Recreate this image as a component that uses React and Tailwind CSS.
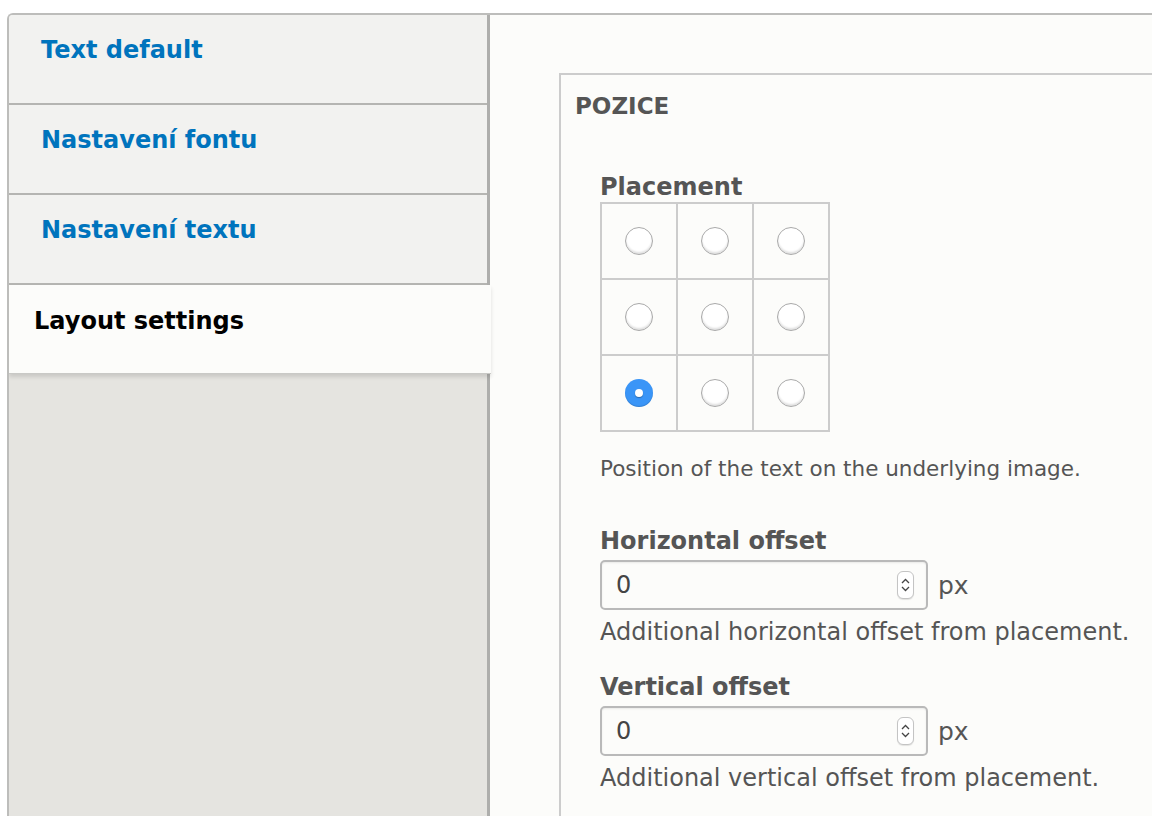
import React from "react";

const font = { fontFamily: '"DejaVu Sans", "Liberation Sans", sans-serif' };

function Radio({ checked }) {
  if (checked) {
    return (
      <div className="w-[28px] h-[28px] rounded-full bg-[#3a95f7] flex items-center justify-center shadow-[inset_0_-1px_1px_rgba(0,0,0,0.15)]">
        <div className="w-[8px] h-[8px] rounded-full bg-white shadow-[0_1px_1px_rgba(0,0,0,0.3)]" />
      </div>
    );
  }
  return (
    <div className="w-[28px] h-[28px] rounded-full border border-[#a9a9a9] bg-white shadow-[inset_0_-2px_2px_rgba(0,0,0,0.12)]" />
  );
}

function Spinner() {
  return (
    <div className="w-[17px] h-[28px] rounded-[6px] border border-[#c4c4c4] bg-white flex flex-col items-center justify-center gap-[2px] shadow-[0_1px_1px_rgba(0,0,0,0.1)]">
      <svg width="9" height="6" viewBox="0 0 9 6"><path d="M1 5 L4.5 1.5 L8 5" fill="none" stroke="#444" strokeWidth="1.3" /></svg>
      <svg width="9" height="6" viewBox="0 0 9 6"><path d="M1 1 L4.5 4.5 L8 1" fill="none" stroke="#444" strokeWidth="1.3" /></svg>
    </div>
  );
}

function NumberField({ label, desc, labelMt }) {
  return (
    <div className={labelMt}>
      <div className="text-[24px] leading-[30px] font-bold text-[#555]">{label}</div>
      <div className="flex items-center mt-[4px]">
        <div className="w-[328px] h-[50px] border-2 border-[#b9b9b9] rounded-[5px] bg-[#fcfcfa] flex items-center pl-[14px] pr-[12px] shadow-[inset_0_1px_2px_rgba(0,0,0,0.08)]">
          <span className="flex-1 text-[24px] text-[#444]">0</span>
          <Spinner />
        </div>
        <span className="ml-[10px] text-[25px] text-[#555] mt-[2px]">px</span>
      </div>
      <div className="mt-[8px] text-[24px] leading-[28px] text-[#555]">{desc}</div>
    </div>
  );
}

export default function App() {
  const tabs = ["Text default", "Nastavení fontu", "Nastavení textu"];
  return (
    <div style={font} className="w-[1152px] h-[816px] bg-white pt-[13px] pl-[7px] overflow-hidden">
      <div className="flex h-full border-t-2 border-l-2 border-[#bdbdbb] rounded-tl-[6px] overflow-hidden">
        <div className="w-[481px] shrink-0 bg-[#e5e4e0] border-r-[3px] border-[#aeaeac] flex flex-col">
          {tabs.map((t) => (
            <div key={t} className="h-[90px] shrink-0 bg-[#f2f2f0] border-b-[2px] border-[#b5b5b2] pl-[32px] pt-[20px]">
              <span className="text-[24px] leading-[30px] font-bold text-[#0074bd]">{t}</span>
            </div>
          ))}
          <div className="relative h-[89px] shrink-0 bg-[#fcfcfa] mr-[-4px] pl-[25px] pt-[21px] z-10 shadow-[0_3px_4px_rgba(0,0,0,0.12)] border-b border-[#c9c9c6]">
            <span className="text-[24px] leading-[30px] font-bold text-black">Layout settings</span>
          </div>
        </div>
        <div className="flex-1 bg-[#fcfcfa] pl-[69px] pt-[58px]">
          <div className="w-[700px] h-[900px] border-2 border-[#cccccc] pl-[14px] pt-[16px]">
            <div className="text-[23px] leading-[30px] font-bold text-[#555]">POZICE</div>
            <div className="pl-[25px] pt-[51px]">
              <div className="text-[24px] leading-[30px] font-bold text-[#555]">Placement</div>
              <div className="grid grid-cols-[repeat(3,76px)] w-fit border-l-2 border-t-2 border-[#cccccc]">
                {[0, 1, 2, 3, 4, 5, 6, 7, 8].map((i) => (
                  <div key={i} className="h-[76px] border-r-2 border-b-2 border-[#cccccc] flex items-center justify-center">
                    <Radio checked={i === 6} />
                  </div>
                ))}
              </div>
              <div className="mt-[24px] text-[21.5px] leading-[26px] text-[#555]">Position of the text on the underlying image.</div>
              <NumberField labelMt="mt-[44px]" label="Horizontal offset" desc="Additional horizontal offset from placement." />
              <NumberField labelMt="mt-[26px]" label="Vertical offset" desc="Additional vertical offset from placement." />
            </div>
          </div>
        </div>
      </div>
    </div>
  );
}
